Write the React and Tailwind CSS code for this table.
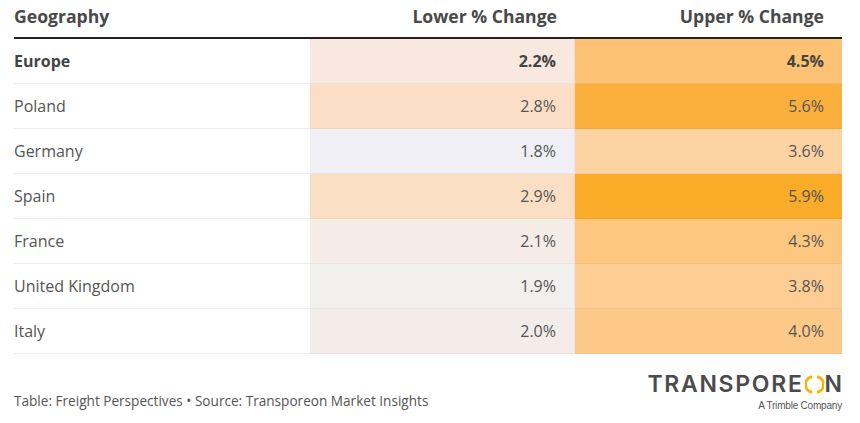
import React from "react";

const rows = [
  { name: "Europe", lower: "2.2%", upper: "4.5%", lowBg: "bg-[#f8e8e0]", upBg: "bg-[#fdc274]", bold: true },
  { name: "Poland", lower: "2.8%", upper: "5.6%", lowBg: "bg-[#fbdec5]", upBg: "bg-[#fbb03d]" },
  { name: "Germany", lower: "1.8%", upper: "3.6%", lowBg: "bg-[#f0eff5]", upBg: "bg-[#fdd3a2]" },
  { name: "Spain", lower: "2.9%", upper: "5.9%", lowBg: "bg-[#fbdfc4]", upBg: "bg-[#faab28]" },
  { name: "France", lower: "2.1%", upper: "4.3%", lowBg: "bg-[#f5ebe7]", upBg: "bg-[#fdc77f]" },
  { name: "United Kingdom", lower: "1.9%", upper: "3.8%", lowBg: "bg-[#f2efef]", upBg: "bg-[#fdcd93]" },
  { name: "Italy", lower: "2.0%", upper: "4.0%", lowBg: "bg-[#f3ece8]", upBg: "bg-[#fdc988]" },
];

function Logo() {
  return (
    <div className="flex flex-col items-end">
      <div className="flex items-center text-[23px] leading-none font-semibold tracking-[1.7px] text-[#4b4b4d] font-['Inter',sans-serif]">
        <span>TRANSPORE</span>
        <svg width="19" height="19" viewBox="0 0 19 19" className="mx-[1px]">
          <path d="M7 1.8 A7.8 7.8 0 0 0 7 17.2" fill="none" stroke="#f5b800" strokeWidth="3" />
          <path d="M12 1.8 A7.8 7.8 0 0 1 12 17.2" fill="none" stroke="#f5b800" strokeWidth="3" />
        </svg>
        <span className="tracking-normal">N</span>
      </div>
      <div className="mt-[5px] text-[10px] leading-none text-[#555] font-['Liberation_Sans',sans-serif] tracking-[-0.2px]">
        A Trimble Company
      </div>
    </div>
  );
}

export default function App() {
  return (
    <div className="w-[860px] h-[423px] bg-white pl-[14px] pr-[18px] font-['Open_Sans',sans-serif] text-[#4d4d4d]">
      <div className="grid grid-cols-[296px_265px_267px] h-[39px] border-b-2 border-[#222] text-[17.6px] font-bold text-[#494949] items-center pb-[4px]">
        <div>Geography</div>
        <div className="text-right pr-[18px]">Lower % Change</div>
        <div className="text-right pr-[18px]">Upper % Change</div>
      </div>
      {rows.map((r) => (
        <div
          key={r.name}
          className={`grid grid-cols-[296px_265px_267px] h-[45px] text-[16px] ${r.bold ? "font-bold text-[#444]" : "text-[#555]"}`}
        >
          <div className="flex items-center border-b border-[#ececec]">{r.name}</div>
          <div className={`flex items-center justify-end pr-[18px] border-b border-r border-black/[0.04] ${r.lowBg}`}>
            {r.lower}
          </div>
          <div className={`flex items-center justify-end pr-[18px] border-b border-black/[0.04] ${r.upBg}`}>
            {r.upper}
          </div>
        </div>
      ))}
      <div className="flex items-start justify-between mt-[19px]">
        <div className="pt-[18px] text-[13.6px] text-[#555]">
          Table: Freight Perspectives • Source: Transporeon Market Insights
        </div>
        <Logo />
      </div>
    </div>
  );
}
